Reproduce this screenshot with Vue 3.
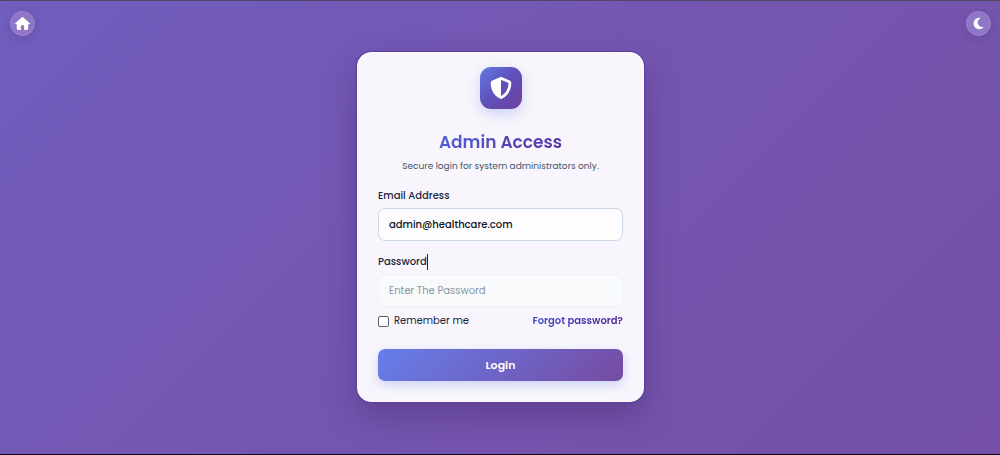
<script setup>
import { ref } from 'vue'

const email = ref('admin@healthcare.com')
const password = ref('')
const remember = ref(false)
</script>

<template>
  <div class="page">
    <header class="topbar">
      <a class="round" href="#" aria-label="Home">
        <svg width="15" height="13" viewBox="0 0 576 512" fill="currentColor" aria-hidden="true">
          <path d="M575.8 255.5c0 18-15 32.1-32 32.1h-32l.7 160.2c.2 35.5-28.500 64.200-64 64.200H352V352c0-17.700-14.300-32-32-32h-64c-17.700 0-32 14.300-32 32v160h-96c-35.300 0-64-28.700-64-64V287.600H32c-18 0-32-14-32-32.100 0-9 3-17 10-24L266.400 8c7-7 15-8 22-8s15 2 21 7l255.400 224.500c8 7 12 15 11 24z" />
        </svg>
      </a>
      <button class="round" type="button" aria-label="Toggle dark mode">
        <svg width="11" height="13" viewBox="0 0 384 512" fill="currentColor" aria-hidden="true">
          <path d="M223.500 32C100 32 0 132.300 0 256s100 224 223.500 224c60.600 0 115.500-24.200 155.800-63.400 5-4.900 6.300-12.500 3.100-18.700s-10.100-9.700-17-8.500c-9.800 1.700-19.800 2.600-30.100 2.600-96.900 0-175.500-78.800-175.500-176 0-65.800 36-123.100 89.300-153.300 6.100-3.500 9.200-10.500 7.700-17.300s-7.300-11.900-14.300-12.500c-6.300-.5-12.600-.9-19-.9z" />
        </svg>
      </button>
    </header>

    <main class="stage">
      <form class="card" @submit.prevent>
        <div class="badge">
          <svg width="22" height="22" viewBox="0 0 512 512" fill="currentColor" aria-hidden="true">
            <path fill-rule="evenodd" d="M256 0c4.600 0 9.200 1 13.400 2.900l188.300 79.900c22 9.300 38.400 31 38.300 57.200-.5 99.200-41.300 280.700-213.600 363.200-16.700 8-36.100 8-52.800 0C57.300 420.700 16.500 239.200 16 140c-.1-26.200 16.300-47.900 38.300-57.200L242.700 2.900C246.800 1 251.400 0 256 0zm0 66.800v378.100C394 378 431.100 230.100 432 141.400L256 66.800z" />
          </svg>
        </div>
        <h1>Admin Access</h1>
        <p class="lead">Secure login for system administrators only.</p>

        <div class="field">
          <label for="email">Email Address</label>
          <input id="email" v-model="email" type="email" autocomplete="off" />
        </div>
        <div class="field">
          <label for="password"><span class="caret">Password</span></label>
          <input id="password" v-model="password" class="muted" type="password" placeholder="Enter The Password" />
        </div>

        <div class="options">
          <label class="remember" for="remember">
            <input id="remember" v-model="remember" type="checkbox" />
            Remember me
          </label>
          <a class="forgot" href="#">Forgot password?</a>
        </div>
        <button class="login" type="submit">Login</button>
      </form>
    </main>
  </div>
</template>

<style>
body {
  margin: 0;
}
</style>

<style scoped>
.page {
  box-sizing: border-box;
  min-height: 100vh;
  display: flex;
  flex-direction: column;
  padding: 10px 9px 16px 10px;
  border-top: 1px solid #4c4763;
  border-bottom: 1px solid #0c0712;
  background: linear-gradient(135deg, #715dbd 0%, #7456b1 50%, #7450a7 100%);
  font-family: Poppins, Inter, "Open Sans", sans-serif;
  color: #1b2540;
}

.topbar {
  display: flex;
  justify-content: space-between;
}

.round {
  box-sizing: border-box;
  width: 25px;
  height: 25px;
  padding: 0;
  display: flex;
  align-items: center;
  justify-content: center;
  border: 1px solid #9c85cc;
  border-radius: 50%;
  background: #8f76c6;
  color: #fff;
  box-shadow: 0 3px 8px rgba(50, 30, 100, 0.15);
}

.stage {
  flex: 1;
  display: flex;
  justify-content: center;
  align-items: flex-start;
  padding-top: 16px;
}

.card {
  box-sizing: border-box;
  width: 287px;
  max-width: 100%;
  padding: 14px 20px 20px;
  border: 1px solid #fcfaff;
  border-radius: 14px;
  background: #f8f6fc;
  box-shadow: 0 0 1px 1px #5c3fa0, 0 14px 32px rgba(55, 30, 90, 0.35);
}

.badge {
  width: 42px;
  height: 42px;
  margin: 0 auto;
  display: flex;
  align-items: center;
  justify-content: center;
  border-radius: 11px;
  background: linear-gradient(135deg, #627be6 0%, #5f4fb8 50%, #6f419b 100%);
  color: #fff;
  box-shadow: 0 5px 14px rgba(102, 126, 234, 0.3);
}

h1 {
  width: fit-content;
  margin: 20px auto 0;
  font-size: 17px;
  line-height: 26px;
  font-weight: 600;
  background: linear-gradient(135deg, #5263d8, #5a2fa0);
  background-clip: text;
  color: transparent;
}

.lead {
  margin: 4px 0 15px;
  text-align: center;
  font-size: 9px;
  line-height: 14px;
  color: #43546c;
}

.field {
  margin-bottom: 13px;
}

.field label {
  display: block;
  margin-bottom: 4px;
  font-size: 10px;
  line-height: 16px;
  font-weight: 500;
}

.caret {
  display: inline-block;
  border-right: 1px solid #1b2540;
}

.field input {
  box-sizing: border-box;
  display: block;
  width: 100%;
  height: 33px;
  padding: 0 10px;
  border: 1px solid #cbd8e7;
  border-radius: 7px;
  outline: none;
  background: #fdfdfe;
  font: 500 10px/16px Poppins, Inter, "Open Sans", sans-serif;
  color: #0d1224;
}

.field .muted {
  border-color: #edf3f7;
  background: #f8fafc;
}

.field .muted::placeholder {
  color: #8795a5;
  font-weight: 400;
  opacity: 1;
}

.options {
  display: flex;
  align-items: center;
  justify-content: space-between;
  margin-top: -7px;
  font-size: 10px;
  line-height: 16px;
}

.remember {
  display: flex;
  align-items: center;
  gap: 5px;
}

.remember input {
  appearance: none;
  box-sizing: border-box;
  width: 11px;
  height: 11px;
  margin: 0;
  border: 1px solid #5f6068;
  border-radius: 2px;
  background: #fff;
}

.forgot {
  font-weight: 600;
  text-decoration: none;
  background: linear-gradient(135deg, #3b50d4, #541c8c);
  background-clip: text;
  color: transparent;
}

.login {
  display: block;
  width: 100%;
  height: 32px;
  margin-top: 20px;
  padding: 0;
  border: 0;
  border-radius: 7px;
  background: linear-gradient(135deg, #667eea, #764ba2);
  box-shadow: 0 4px 11px rgba(102, 126, 234, 0.3);
  font: 600 11px/16px Poppins, Inter, "Open Sans", sans-serif;
  color: #fff;
}
</style>
